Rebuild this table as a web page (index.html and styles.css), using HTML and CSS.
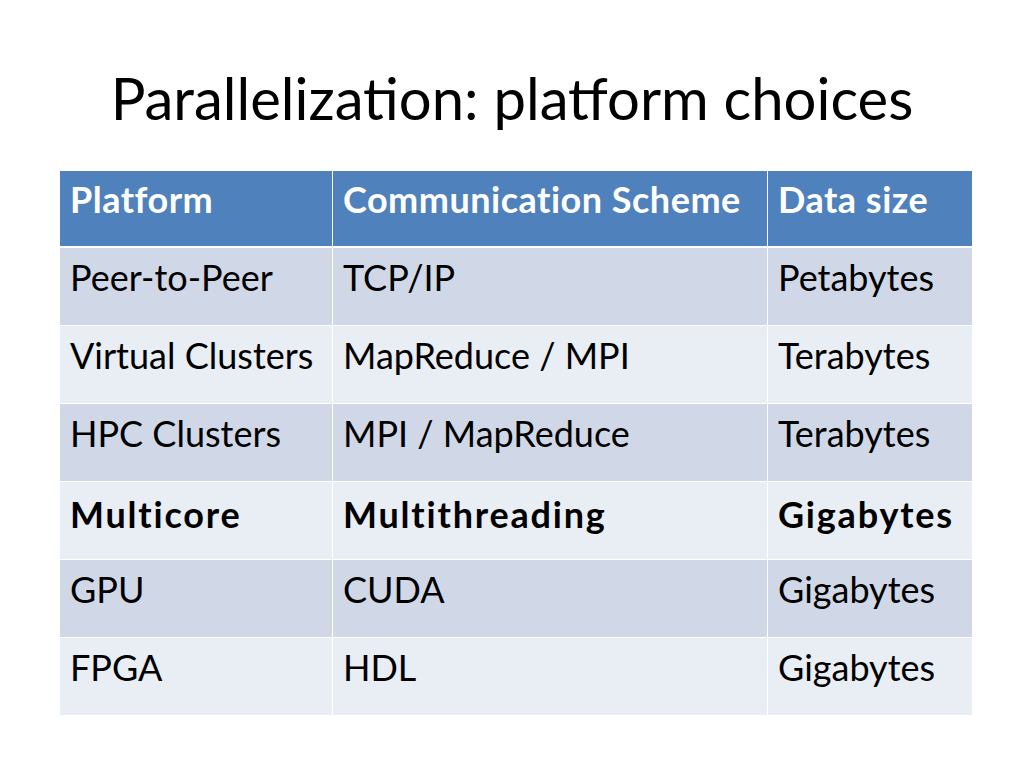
FILE: index.html
```html
<!DOCTYPE html>
<html>
<head>
<meta charset="utf-8">
<link rel="stylesheet" href="styles.css">
</head>
<body>
<div class="slide">
  <h1 class="title">Parallelization: platform choices</h1>
  <div class="table">
    <div class="cell head">Platform</div>
    <div class="cell head">Communication Scheme</div>
    <div class="cell head">Data size</div>

    <div class="cell odd">Peer-to-Peer</div>
    <div class="cell odd">TCP/IP</div>
    <div class="cell odd">Petabytes</div>

    <div class="cell even">Virtual Clusters</div>
    <div class="cell even">MapReduce / MPI</div>
    <div class="cell even">Terabytes</div>

    <div class="cell odd">HPC Clusters</div>
    <div class="cell odd">MPI / MapReduce</div>
    <div class="cell odd">Terabytes</div>

    <div class="cell even bold">Multicore</div>
    <div class="cell even bold">Multithreading</div>
    <div class="cell even bold">Gigabytes</div>

    <div class="cell odd">GPU</div>
    <div class="cell odd">CUDA</div>
    <div class="cell odd">Gigabytes</div>

    <div class="cell even">FPGA</div>
    <div class="cell even">HDL</div>
    <div class="cell even">Gigabytes</div>
  </div>
</div>
</body>
</html>
```

FILE: styles.css
```css
html, body {
  margin: 0;
  padding: 0;
  background: #ffffff;
}
.slide {
  width: 1024px;
  height: 768px;
  font-family: Lato, "Open Sans", sans-serif;
  color: #000;
  display: flex;
  flex-direction: column;
  align-items: center;
}
.title {
  margin: 60px 0 0 0;
  height: 111px;
  font-weight: 400;
  font-size: 58px;
  line-height: 76px;
  text-align: center;
}
.table {
  align-self: flex-start;
  margin-left: 60px;
  display: grid;
  grid-template-columns: 272px 434px 204px;
  grid-auto-rows: 77px;
  grid-template-rows: 76px;
  column-gap: 1px;
  row-gap: 1px;
}
.cell {
  padding: 0 10px 0 10px;
  font-size: 36px;
  line-height: 58px;
  white-space: nowrap;
}
.head {
  background: #4f81bd;
  color: #ffffff;
  font-weight: 700;
  letter-spacing: 0.5px;
  margin-bottom: 1px;
  line-height: 56px;
}
.odd { background: #d0d8e8; }
.even { background: #e9edf4; }
.bold {
  font-weight: 700;
  letter-spacing: 1.8px;
  padding-top: 3px;
}
```
